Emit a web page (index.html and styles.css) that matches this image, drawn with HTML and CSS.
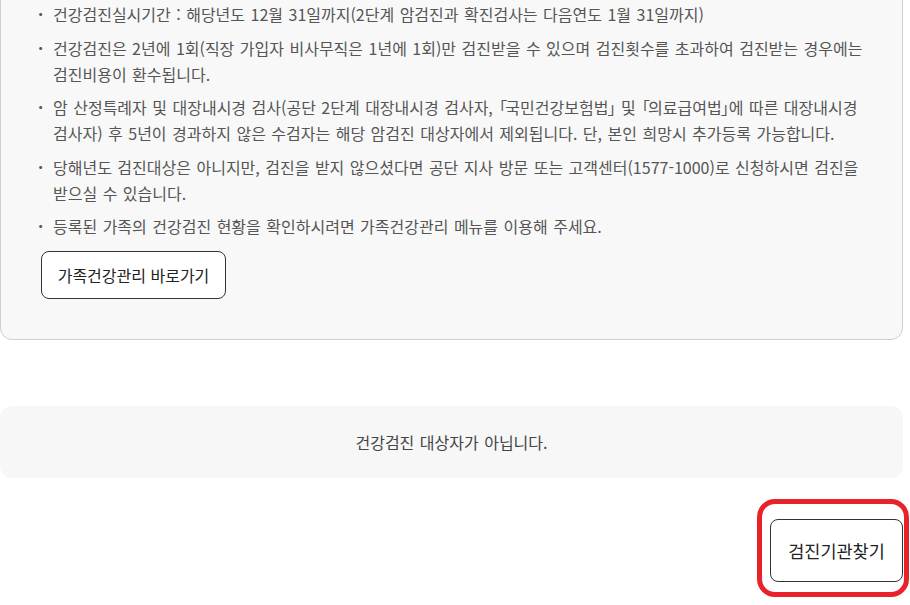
FILE: index.html
```html
<!DOCTYPE html>
<html lang="ko">
<head>
<meta charset="utf-8">
<title>건강검진</title>
<link rel="stylesheet" href="styles.css">
</head>
<body>
<div class="page">
  <div class="card">
    <ul class="notes">
      <li><span class="txt">건강검진실시기간 : 해당년도 12월 31일까지(2단계 암검진과 확진검사는 다음연도 1월 31일까지)</span></li>
      <li><span class="txt">건강검진은 2년에 1회(직장 가입자 비사무직은 1년에 1회)만 검진받을 수 있으며 검진횟수를 초과하여 검진받는 경우에는 검진비용이 환수됩니다.</span></li>
      <li><span class="txt">암 산정특례자 및 대장내시경 검사(공단 2단계 대장내시경 검사자, <span class="bo">「</span>국민건강보험법<span class="bc">」</span> 및 <span class="bo">「</span>의료급여법<span class="bc">」</span>에 따른 대장내시경 검사자) 후 5년이 경과하지 않은 수검자는 해당 암검진 대상자에서 제외됩니다. 단, 본인 희망시 추가등록 가능합니다.</span></li>
      <li><span class="txt">당해년도 검진대상은 아니지만, 검진을 받지 않으셨다면 공단 지사 방문 또는 고객센터(1577-1000)로 신청하시면 검진을 받으실 수 있습니다.</span></li>
      <li><span class="txt">등록된 가족의 건강검진 현황을 확인하시려면 가족건강관리 메뉴를 이용해 주세요.</span></li>
    </ul>
    <button class="btn family">가족건강관리 바로가기</button>
  </div>
  <div class="empty">건강검진 대상자가 아닙니다.</div>
  <div class="actions">
    <div class="highlight">
      <button class="btn find">검진기관찾기</button>
    </div>
  </div>
</div>
</body>
</html>
```
FILE: styles.css
```css
html, body {
  margin: 0;
  padding: 0;
  background: #fff;
}
body {
  font-family: "Noto Sans CJK KR", "Noto Sans", sans-serif;
  color: #555;
  overflow: hidden;
}
.page {
  width: 910px;
}
.card {
  width: 903px;
  box-sizing: border-box;
  margin-top: -20px;
  padding: 20px 27px 40px 37px;
  background: #f8f8f8;
  border: 1px solid #cfcfcf;
  border-radius: 0 0 12px 12px;
}
.notes {
  list-style: none;
  margin: 0;
  padding: 0;
}
.notes li {
  display: flex;
  font-size: 16px;
  line-height: 26px;
  margin-bottom: 7.6px;
  color: #555;
  word-spacing: 1px;
}
.notes li:last-child {
  margin-bottom: 0;
}
.notes li::before {
  content: "·";
  flex: 0 0 15px;
  font-weight: 700;
}
.txt {
  flex: 1;
  min-width: 0;
  word-break: keep-all;
}
.bo {
  margin-left: -7px;
  margin-right: -2px;
}
.bc {
  margin-left: -1px;
  margin-right: -8px;
}
.btn {
  font-family: "Noto Sans CJK KR", "Noto Sans", sans-serif;
  background: #fff;
  border: 1px solid #333;
  border-radius: 8px;
  color: #222;
  cursor: pointer;
}
.family {
  margin-top: 12px;
  margin-left: 3px;
  width: 185px;
  height: 48px;
  font-size: 16px;
  padding: 0;
}
.empty {
  width: 903px;
  height: 72px;
  margin-top: 66px;
  background: #f7f7f7;
  border-radius: 12px;
  display: flex;
  align-items: center;
  justify-content: center;
  font-size: 16px;
  word-spacing: 1px;
  color: #444;
}
.actions {
  display: flex;
  justify-content: flex-end;
  padding-right: 1px;
  margin-top: 21px;
}
.highlight {
  border: 5px solid #e8212b;
  border-radius: 18px;
  padding: 15px 1px 10px 8px;
}
.find {
  width: 133px;
  height: 63px;
  font-size: 17.5px;
  padding: 0;
  display: block;
}
```
